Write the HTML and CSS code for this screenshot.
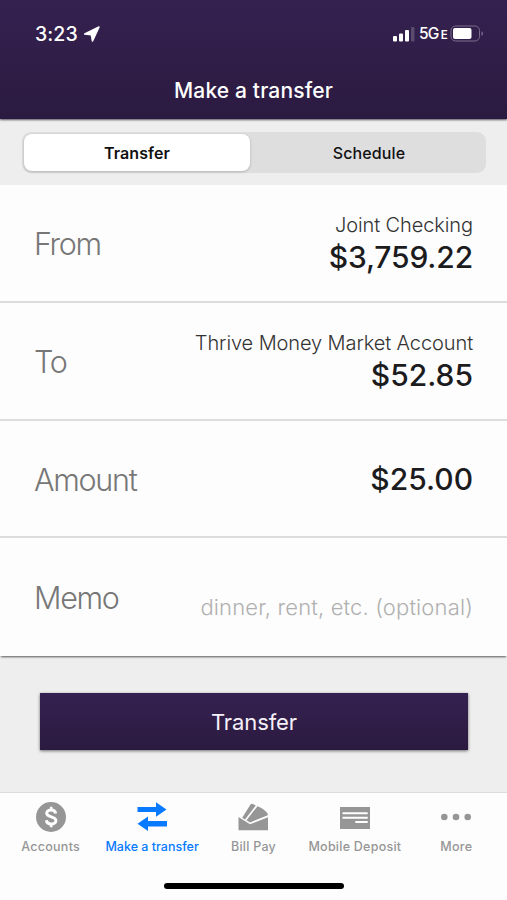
FILE: index.html
```html
<!DOCTYPE html>
<html lang="en">
<head>
<meta charset="utf-8">
<title>Make a transfer</title>
<link rel="stylesheet" href="styles.css">
</head>
<body>
<div class="screen">
  <header class="header">
    <div class="status">
      <span class="time">3:23</span>
      <svg class="location" width="16" height="16" viewBox="0 0 16 16"><path d="M15 1 8.500 15 7.400 8.800.8 8Z" fill="#fff" stroke="#fff" stroke-width="1.600" stroke-linejoin="round"/></svg>
      <div class="signals">
        <svg width="24" height="16" viewBox="0 0 24 16"><g fill="#fff"><rect x="1" y="10" width="4" height="5.500" rx="1"/><rect x="7" y="7.500" width="4" height="8" rx="1"/><rect x="13" y="4" width="4" height="11.500" rx="1"/><rect x="19" y="1" width="3.500" height="14.500" rx="1" opacity=".2"/></g></svg>
        <span class="network">5G<small>E</small></span>
        <svg width="34" height="17" viewBox="0 0 34 17"><rect x="1" y="1" width="28.500" height="15" rx="4.500" fill="none" stroke="#7c6e8c"/><rect x="3" y="3" width="18.500" height="11" rx="2" fill="#fff"/><path d="M31.500 6v5q1.500-1 1.500-2.500T31.500 6Z" fill="#7c6e8c"/></svg>
      </div>
    </div>
    <h1 class="title">Make a transfer</h1>
  </header>
  <div class="segments">
    <div class="segmented">
      <div class="segment active">Transfer</div>
      <div class="segment">Schedule</div>
    </div>
  </div>
  <main class="form">
    <div class="row"><span class="label">From</span><div class="value"><div class="account">Joint Checking</div><div class="money long">$3,759.22</div></div></div>
    <div class="row"><span class="label">To</span><div class="value"><div class="account">Thrive Money Market Account</div><div class="money">$52.85</div></div></div>
    <div class="row"><span class="label">Amount</span><div class="value"><div class="money">$25.00</div></div></div>
    <div class="row"><span class="label">Memo</span><div class="value hint">dinner, rent, etc. (optional)</div></div>
  </main>
  <div class="action"><button class="submit">Transfer</button></div>
  <nav class="tabs">
    <div class="tab">
      <svg width="32" height="32" viewBox="0 0 32 32"><circle cx="16" cy="16" r="15" fill="#969696"/><path d="M20.700 12.600C20.300 10.200 18.500 9 16.200 9c-2.700 0-4.500 1.300-4.500 3.300 0 4.600 9.200 2.500 9.200 7.100 0 2.200-2 3.600-4.700 3.600-2.700 0-4.500-1.300-4.800-3.800" fill="none" stroke="#fff" stroke-width="3"/><path d="M16.200 5.800V9M16.200 23v3.200" stroke="#fff" stroke-width="2.600"/></svg>
      <span class="tab-label">Accounts</span>
    </div>
    <div class="tab current">
      <svg width="32" height="32" viewBox="0 0 32 32"><path d="M1.500 6H20V1.300l10.500 7.200L20 15.700V11H1.500ZM31 20H12v-4.500L1.500 22.800 12 30v-4.500h19Z" fill="#087aff"/></svg>
      <span class="tab-label">Make a transfer</span>
    </div>
    <div class="tab">
      <svg width="32" height="32" viewBox="0 0 32 32"><g fill="#969696"><path d="M1.500 16 13 23.300 31 16.300V29.300H1.500Z"/><path d="M5.200 16.700 13.500 3.600q1-1.300 2.500-.6L18.800 4.500 8 18.500ZM9.500 19.300 20.500 5.200Q27.500 7.600 30.800 13V14.200L13 21.500Z"/></g></svg>
      <span class="tab-label">Bill Pay</span>
    </div>
    <div class="tab">
      <svg width="32" height="32" viewBox="0 0 32 32"><path d="M1 6h30v22H1Z" fill="#969696"/><path d="M3.500 12.300h25.200M3.500 16.700h25.200M16.300 21h12.400" stroke="#fff" stroke-width="2"/></svg>
      <span class="tab-label">Mobile Deposit</span>
    </div>
    <div class="tab">
      <svg width="32" height="32" viewBox="0 0 32 32"><g fill="#969696"><circle cx="4.300" cy="16" r="3.300"/><circle cx="16" cy="16" r="3.300"/><circle cx="27.700" cy="16" r="3.300"/></g></svg>
      <span class="tab-label">More</span>
    </div>
  </nav>
  <div class="home"><div class="home-bar"></div></div>
</div>
</body>
</html>
```
FILE: styles.css
```css
* { box-sizing: border-box; }
body { margin: 0; font-family: Inter, "Liberation Sans", sans-serif; color: #1c1c1e; }
.screen { width: 507px; height: 900px; display: flex; flex-direction: column; background: #eee; overflow: hidden; }
.header { height: 119px; flex: none; background: linear-gradient(#352150, #2b1a40); color: #fff; box-shadow: 0 1px 2px #5a5165; }
.status { height: 67px; padding: 0 23px 0 35px; display: flex; align-items: center; }
.time { font-size: 19.500px; font-weight: 550; letter-spacing: .1px; }
.location { margin-left: 6px; }
.signals { margin-left: auto; display: flex; align-items: center; gap: 3px; }
.network { font-size: 15.500px; font-weight: 500; letter-spacing: -.7px; white-space: nowrap; }
.network small { font-size: 11.500px; font-weight: 600; margin-left: 2px; }
.title { margin: 0; height: 48px; line-height: 48px; text-align: center; font-size: 21px; font-weight: 550; letter-spacing: .15px; }
.segments { height: 66px; flex: none; padding: 13px 21px 12px 22px; }
.segmented { height: 41px; display: grid; grid-template-columns: 1fr 1fr; background: #dededf; border-radius: 9px; padding: 2px; }
.segment { display: flex; align-items: center; justify-content: center; font-size: 16px; font-weight: 500; letter-spacing: .1px; color: #111; }
.active { background: #fff; border-radius: 8px; font-weight: 600; box-shadow: 0 1px 3px #0003; margin-right: 4px; }
.form { flex: none; background: #fdfdfd; box-shadow: 0 2px 2px -1px #555; }
.row { height: 117.750px; padding: 2px 34px 0; display: flex; align-items: center; justify-content: space-between; border-bottom: 2px solid #dcdcdc; }
.row:last-child { border-bottom: 0; padding-top: 0; }
.label { font-size: 30.500px; font-weight: 300; letter-spacing: -1.300px; color: #777; }
.value { text-align: right; }
.account { font-size: 20px; font-weight: 300; letter-spacing: -.1px; line-height: 26px; color: #333; white-space: nowrap; }
.money { font-size: 30px; line-height: 38px; font-weight: 450; }
.long { letter-spacing: -.15px; }
.hint { font-size: 22px; font-weight: 300; letter-spacing: .15px; color: #b0b0b0; padding-top: 20px; white-space: nowrap; }
.action { flex: 1; padding: 37px 39px 0 40px; }
.submit { display: block; width: 100%; height: 57px; padding: 0; border: 0; background: linear-gradient(#352150, #2b1a40); color: #f5f0fa; font: 400 22px Inter, sans-serif; letter-spacing: -.1px; box-shadow: 0 1px 3px #0008; }
.tabs { height: 76px; flex: none; padding: 8px 0 0; display: grid; grid-template-columns: repeat(5, 1fr); background: #fdfdfd; border-top: 1px solid #ddd; }
.tab { display: flex; flex-direction: column; align-items: center; color: #969696; }
.tab-label { font-size: 12.500px; font-weight: 500; letter-spacing: .25px; line-height: 27px; white-space: nowrap; }
.current { color: #087aff; }
.current .tab-label { letter-spacing: 0; }
.home { height: 32px; flex: none; background: #fdfdfd; display: flex; justify-content: center; padding-top: 15px; }
.home-bar { width: 180px; height: 6px; border-radius: 3px; background: #000; }
```
